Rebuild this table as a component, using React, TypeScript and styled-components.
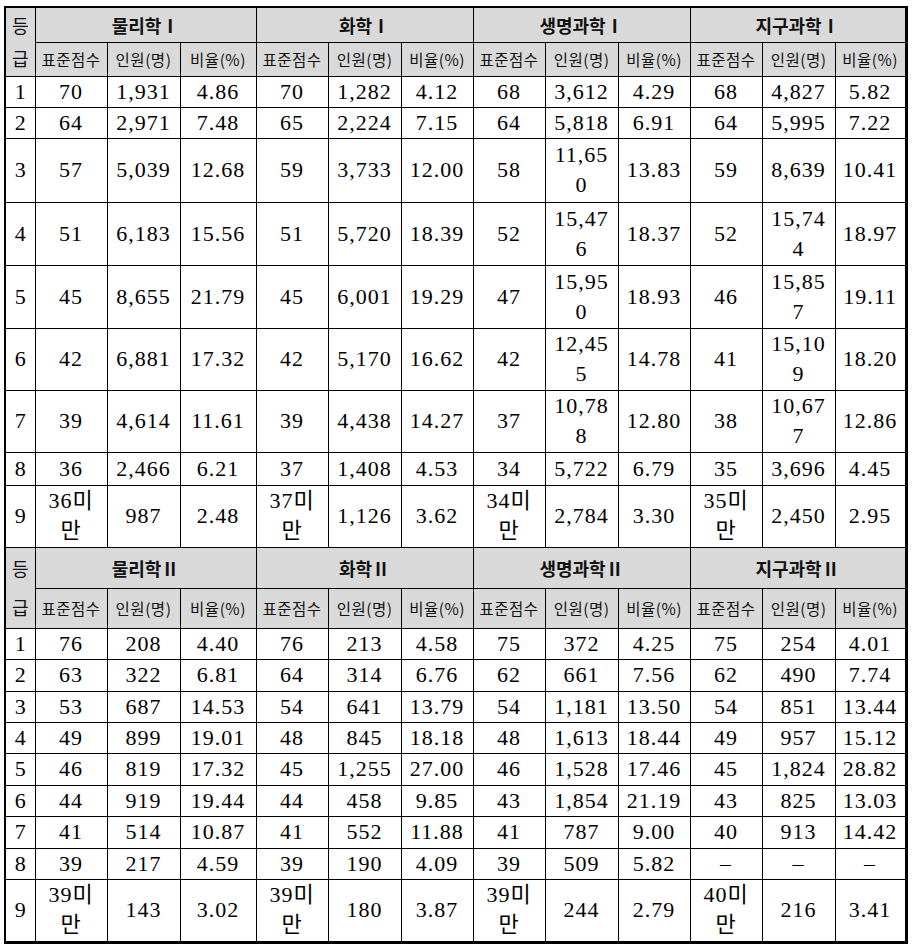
import React from "react";
import styled, { createGlobalStyle } from "styled-components";

const Global = createGlobalStyle`
  html, body { margin: 0; padding: 0; background: #ffffff; }
  body { font-family: "Liberation Serif", "Noto Sans CJK KR", serif; color: #000; }
`;

const Page = styled.div`
  padding: 6px 0 0 4px;
`;

const Table = styled.table`
  border-collapse: collapse;
  table-layout: fixed;
  width: 902px;
  border-top: 2px solid #000;
  border-left: 2px solid #000;
  border-right: 3px solid #000;
  border-bottom: 3px solid #000;
`;

const Col = styled.col<{ $w: number }>`
  width: ${(p) => p.$w}px;
`;

const Row = styled.tr<{ $h: number }>`
  height: ${(p) => p.$h}px;
`;

const HeadRow = styled.tr<{ $h: number }>`
  height: ${(p) => p.$h}px;
  background: #d9d9d9;
`;

const GradeHead = styled.th<{ $lh: number }>`
  border: 1px solid #000;
  padding: 0;
  font-family: "Noto Sans CJK KR", sans-serif;
  font-weight: 400;
  font-size: 18px;
  line-height: ${(p) => p.$lh}px;
  text-align: center;
  vertical-align: middle;
  word-break: break-all;
  color: #111;
`;

const GroupTitle = styled.th`
  border: 1px solid #000;
  padding: 0;
  font-family: "Noto Sans CJK KR", sans-serif;
  font-weight: 700;
  font-size: 18px;
  line-height: 24px;
  text-align: center;
  vertical-align: middle;
  color: #111;
`;

const SubHead = styled.th`
  border: 1px solid #000;
  padding: 0;
  font-family: "Noto Sans CJK KR", sans-serif;
  font-weight: 400;
  font-size: 15.5px;
  letter-spacing: 0.5px;
  line-height: 22px;
  text-align: center;
  vertical-align: middle;
  white-space: nowrap;
  color: #111;
`;

const GradeCell = styled.td`
  border: 1px solid #000;
  padding: 0;
  font-size: 22px;
  line-height: 30px;
  text-align: center;
  vertical-align: middle;
`;

const NumCell = styled.td`
  border: 1px solid #000;
  padding: 0 4px;
  font-size: 22px;
  letter-spacing: 1px;
  line-height: 30px;
  text-align: center;
  vertical-align: middle;
  word-break: break-all;
`;

const widths = [30, 72, 73, 76, 72, 73, 72, 72, 73, 72, 72, 73, 71];

type Section = {
  titles: string[];
  headHeights: [number, number];
  gradeLh: number;
  rows: { h: number; cells: string[] }[];
};

const sub = ["표준점수", "인원(명)", "비율(%)"];

const sections: Section[] = [
  {
    titles: ["물리학Ⅰ", "화학Ⅰ", "생명과학Ⅰ", "지구과학Ⅰ"],
    headHeights: [35, 34],
    gradeLh: 33,
    rows: [
      { h: 31, cells: ["70", "1,931", "4.86", "70", "1,282", "4.12", "68", "3,612", "4.29", "68", "4,827", "5.82"] },
      { h: 31, cells: ["64", "2,971", "7.48", "65", "2,224", "7.15", "64", "5,818", "6.91", "64", "5,995", "7.22"] },
      { h: 64, cells: ["57", "5,039", "12.68", "59", "3,733", "12.00", "58", "11,650", "13.83", "59", "8,639", "10.41"] },
      { h: 63, cells: ["51", "6,183", "15.56", "51", "5,720", "18.39", "52", "15,476", "18.37", "52", "15,744", "18.97"] },
      { h: 63, cells: ["45", "8,655", "21.79", "45", "6,001", "19.29", "47", "15,950", "18.93", "46", "15,857", "19.11"] },
      { h: 62, cells: ["42", "6,881", "17.32", "42", "5,170", "16.62", "42", "12,455", "14.78", "41", "15,109", "18.20"] },
      { h: 62, cells: ["39", "4,614", "11.61", "39", "4,438", "14.27", "37", "10,788", "12.80", "38", "10,677", "12.86"] },
      { h: 33, cells: ["36", "2,466", "6.21", "37", "1,408", "4.53", "34", "5,722", "6.79", "35", "3,696", "4.45"] },
      { h: 62, cells: ["36미만", "987", "2.48", "37미만", "1,126", "3.62", "34미만", "2,784", "3.30", "35미만", "2,450", "2.95"] },
    ],
  },
  {
    titles: ["물리학Ⅱ", "화학Ⅱ", "생명과학Ⅱ", "지구과학Ⅱ"],
    headHeights: [41, 40],
    gradeLh: 39,
    rows: [
      { h: 31, cells: ["76", "208", "4.40", "76", "213", "4.58", "75", "372", "4.25", "75", "254", "4.01"] },
      { h: 32, cells: ["63", "322", "6.81", "64", "314", "6.76", "62", "661", "7.56", "62", "490", "7.74"] },
      { h: 31, cells: ["53", "687", "14.53", "54", "641", "13.79", "54", "1,181", "13.50", "54", "851", "13.44"] },
      { h: 31, cells: ["49", "899", "19.01", "48", "845", "18.18", "48", "1,613", "18.44", "49", "957", "15.12"] },
      { h: 32, cells: ["46", "819", "17.32", "45", "1,255", "27.00", "46", "1,528", "17.46", "45", "1,824", "28.82"] },
      { h: 31, cells: ["44", "919", "19.44", "44", "458", "9.85", "43", "1,854", "21.19", "43", "825", "13.03"] },
      { h: 32, cells: ["41", "514", "10.87", "41", "552", "11.88", "41", "787", "9.00", "40", "913", "14.42"] },
      { h: 31, cells: ["39", "217", "4.59", "39", "190", "4.09", "39", "509", "5.82", "–", "–", "–"] },
      { h: 63, cells: ["39미만", "143", "3.02", "39미만", "180", "3.87", "39미만", "244", "2.79", "40미만", "216", "3.41"] },
    ],
  },
];

export default function App() {
  return (
    <Page>
      <Global />
      <Table>
        <colgroup>
          {widths.map((w, i) => (
            <Col key={i} $w={w} />
          ))}
        </colgroup>
        {sections.map((s, si) => (
          <tbody key={si}>
            <HeadRow $h={s.headHeights[0]}>
              <GradeHead rowSpan={2} $lh={s.gradeLh}>
                등급
              </GradeHead>
              {s.titles.map((t) => (
                <GroupTitle key={t} colSpan={3}>
                  {t}
                </GroupTitle>
              ))}
            </HeadRow>
            <HeadRow $h={s.headHeights[1]}>
              {s.titles.map((t) =>
                sub.map((x) => <SubHead key={t + x}>{x}</SubHead>)
              )}
            </HeadRow>
            {s.rows.map((r, ri) => (
              <Row key={ri} $h={r.h}>
                <GradeCell>{ri + 1}</GradeCell>
                {r.cells.map((c, ci) => (
                  <NumCell key={ci}>{c}</NumCell>
                ))}
              </Row>
            ))}
          </tbody>
        ))}
      </Table>
    </Page>
  );
}
